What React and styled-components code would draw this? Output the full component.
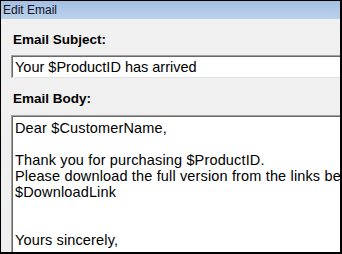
import React from "react";
import styled, { createGlobalStyle } from "styled-components";

const GlobalStyle = createGlobalStyle`
  html, body {
    margin: 0;
    padding: 0;
    background: #ffffff;
  }
`;

const Window = styled.div`
  box-sizing: border-box;
  width: 342px;
  height: 254px;
  border-top: 1px solid #000;
  border-left: 1px solid #000;
  border-right: 2px solid #000;
  border-bottom: 2px solid #000;
  background: #f0f0f0;
  overflow: hidden;
  display: flex;
  flex-direction: column;
`;

const TitleBar = styled.div`
  height: 18px;
  flex: none;
  background: linear-gradient(#a3bfe3, #bbd2ec);
  display: flex;
  align-items: center;
  padding-left: 2px;
  font-family: "Liberation Sans", Arial, sans-serif;
  font-size: 12px;
  color: #111122;
`;

const Content = styled.div`
  flex: 1;
  display: flex;
  flex-direction: column;
  padding: 13px 0 0 10px;
  min-height: 0;
`;

const Label = styled.div`
  font-family: "Liberation Sans", Arial, sans-serif;
  font-weight: bold;
  font-size: 13.5px;
  line-height: 16px;
  color: #000;
  padding-left: 2px;
  margin-bottom: ${p => p.gap}px;
`;

const Field = styled.div`
  box-sizing: border-box;
  background: #fff;
  border-top: 1px solid #a0a0a0;
  border-left: 1px solid #a0a0a0;
  border-bottom: 1px solid #e3e3e3;
  box-shadow: inset 1px 1px 0 #696969;
  font-family: "Liberation Sans", Arial, sans-serif;
  font-size: 14.5px;
  line-height: 16px;
  color: #000;
  white-space: pre;
  overflow: hidden;
`;

const SubjectInput = styled(Field)`
  height: 23px;
  padding: 3px 0 0 3px;
  margin-bottom: 13px;
`;

const BodyArea = styled(Field)`
  flex: 1;
  padding: 4px 0 0 3px;
  border-bottom: none;
  letter-spacing: 0.15px;
`;

const bodyText = `Dear $CustomerName,

Thank you for purchasing $ProductID.
Please download the full version from the links below.
$DownloadLink


Yours sincerely,`;

export default function App() {
  return (
    <>
      <GlobalStyle />
      <Window>
        <TitleBar>Edit Email</TitleBar>
        <Content>
          <Label gap={7}>Email Subject:</Label>
          <SubjectInput>Your $ProductID has arrived</SubjectInput>
          <Label gap={8}>Email Body:</Label>
          <BodyArea>{bodyText}</BodyArea>
        </Content>
      </Window>
    </>
  );
}
